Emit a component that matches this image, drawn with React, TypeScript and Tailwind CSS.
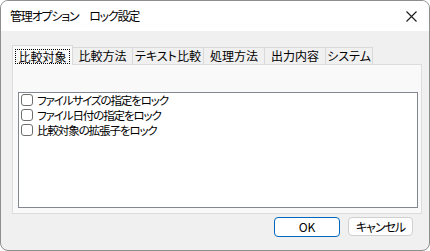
const tabs = [
  { label: "比較方法", w: "w-[60px]" },
  { label: "テキスト比較", w: "w-[71px]" },
  { label: "処理方法", w: "w-[61px]" },
  { label: "出力内容", w: "w-[61px]" },
  { label: "システム", w: "w-[47px]" },
];

const items = [
  "ファイルサイズの指定をロック",
  "ファイル日付の指定をロック",
  "比較対象の拡張子をロック",
];

export default function App() {
  return (
    <div className="w-[430px] h-[251px] flex flex-col rounded-[8px] border border-[#8e8e8e] bg-[#f0f0f0] overflow-hidden text-[12px] leading-none text-black [font-family:'Noto_Sans_CJK_JP',sans-serif] [font-feature-settings:'palt']">
      {/* title bar */}
      <div className="h-[30px] shrink-0 bg-white flex items-center justify-between pl-[9px] pr-[10px]">
        <span className="text-[12px] tracking-[-1.2px]">管理オプション　ロック設定</span>
        <svg width="11" height="11" viewBox="0 0 11 11" className="mr-[2px]">
          <path d="M0.5 0.5 L10.5 10.5 M10.5 0.5 L0.5 10.5" stroke="#1a1a1a" strokeWidth="1.1" />
        </svg>
      </div>

      {/* tabs */}
      <div className="ml-[11px] mt-[13px] flex items-end h-[20px]">
        <div className="relative z-10 w-[61px] h-[20px] -mb-px border border-b-0 border-[#d9d9d9] bg-[#f9f9f9] flex items-start justify-center pt-[3px]">
          <div className="border border-dotted border-black px-[2px] h-[15px] flex items-center">比較対象</div>
        </div>
        {tabs.map((t) => (
          <div
            key={t.label}
            className={`${t.w} h-[17px] border-t border-r border-[#d9d9d9] bg-[#f0f0f0] flex items-center justify-center`}
          >
            {t.label}
          </div>
        ))}
      </div>

      {/* panel */}
      <div className="ml-[11px] w-[410px] h-[150px] border border-[#dcdcdc] bg-[#f9f9f9] pl-[5px] pt-[27px]">
        <div className="w-[400px] h-[116px] border border-[#828790] bg-white pl-[2px] pt-px">
          {items.map((it) => (
            <div key={it} className="h-[15px] flex items-start gap-[4px]">
              <div className="w-[12px] h-[12px] rounded-[3px] border border-[#6e6e6e] bg-white shrink-0" />
              <span className="text-[11.5px] leading-[12px] tracking-[-1.1px]">{it}</span>
            </div>
          ))}
        </div>
      </div>

      {/* buttons */}
      <div className="flex justify-end gap-[8px] mt-[3px] mr-[16px]">
        <button className="w-[66px] h-[20px] rounded-[4px] border border-[#0067c0] bg-white flex items-center justify-center text-[12px]">
          OK
        </button>
        <button className="w-[65px] h-[19px] rounded-[4px] border border-[#d0d0d0] bg-[#fdfdfd] flex items-center justify-center text-[12px] tracking-[-1px]">
          キャンセル
        </button>
      </div>
    </div>
  );
}
